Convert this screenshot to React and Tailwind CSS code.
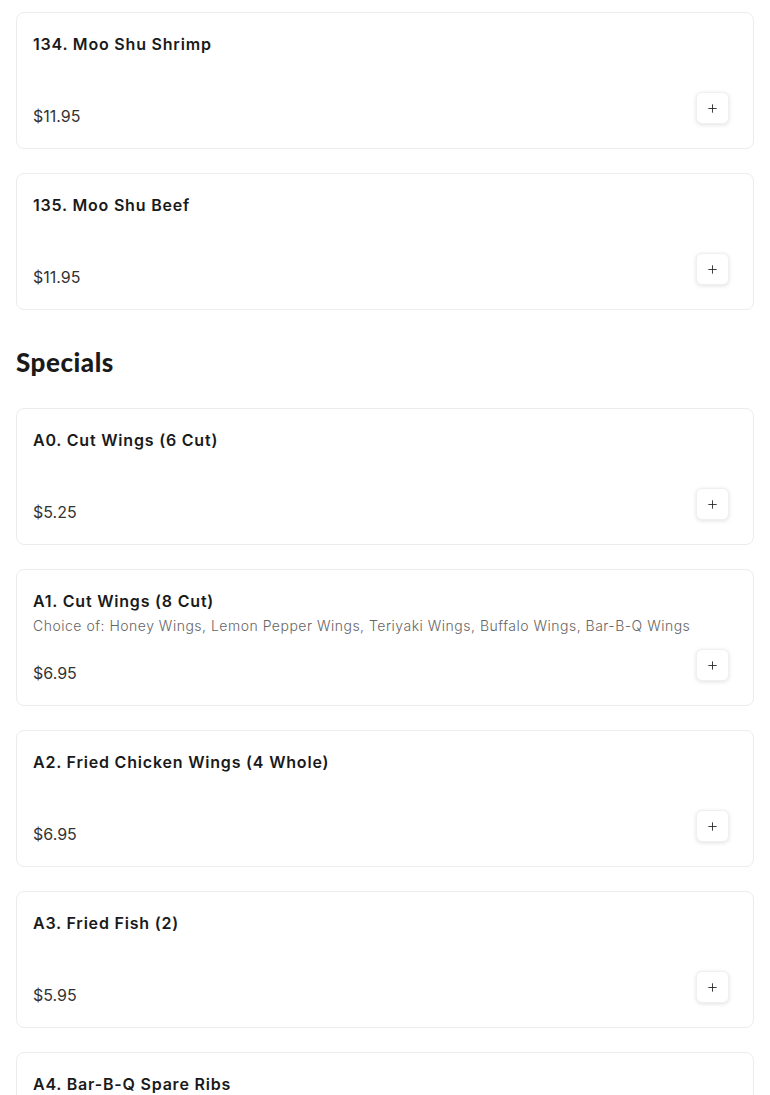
import { Plus } from "lucide-react"

const menu = [
    {
        title: null,
        items: [
            { name: "134. Moo Shu Shrimp", price: "$11.95" },
            { name: "135. Moo Shu Beef", price: "$11.95" },
        ],
    },
    {
        title: "Specials",
        items: [
            { name: "A0. Cut Wings (6 Cut)", price: "$5.25" },
            {
                name: "A1. Cut Wings (8 Cut)",
                desc: "Choice of: Honey Wings, Lemon Pepper Wings, Teriyaki Wings, Buffalo Wings, Bar-B-Q Wings",
                price: "$6.95",
            },
            { name: "A2. Fried Chicken Wings (4 Whole)", price: "$6.95" },
            { name: "A3. Fried Fish (2)", price: "$5.95" },
            { name: "A4. Bar-B-Q Spare Ribs", price: "$8.95" },
        ],
    },
]

export default function App() {
    return <div className="min-h-screen bg-white px-4 pt-3 font-['Inter',sans-serif] text-[#1a1a1a]">
        {menu.map((section, i) =>
            <div key={i}>
                {section.title &&
                    <h2 className="font-['Lato',sans-serif] font-black text-[26px] tracking-[0.02em] leading-[32px] pt-[12px] pb-[30px]">{section.title}</h2>}
                {section.items.map((item, j) => <Item key={j} item={item} />)}
            </div>
        )}
    </div>
}

function Item({ item }) {
    return <div className="h-[137px] mb-[24px] border border-[#ececec] rounded-lg px-4 pt-[19px] pb-5 flex flex-col">
        <div className="font-semibold text-[16px] tracking-[0.8px] leading-6 text-[#1a1a1a]">{item.name}</div>
        {item.desc && <div className="text-[14px] tracking-[0.5px] leading-[26px] font-light text-[#666]">{item.desc}</div>}
        <div className="mt-auto flex justify-between items-end">
            <div className="text-[16px] leading-6 text-[#333]">{item.price}</div>
            <button className="w-[33px] h-8 mb-1 mr-2 rounded-md bg-white border border-[#f0f0f0] shadow-[0_1px_4px_rgba(0,0,0,0.12)] flex items-center justify-center">
                <Plus size={13} strokeWidth={1.6} className="text-[#222]" />
            </button>
        </div>
    </div>
}
